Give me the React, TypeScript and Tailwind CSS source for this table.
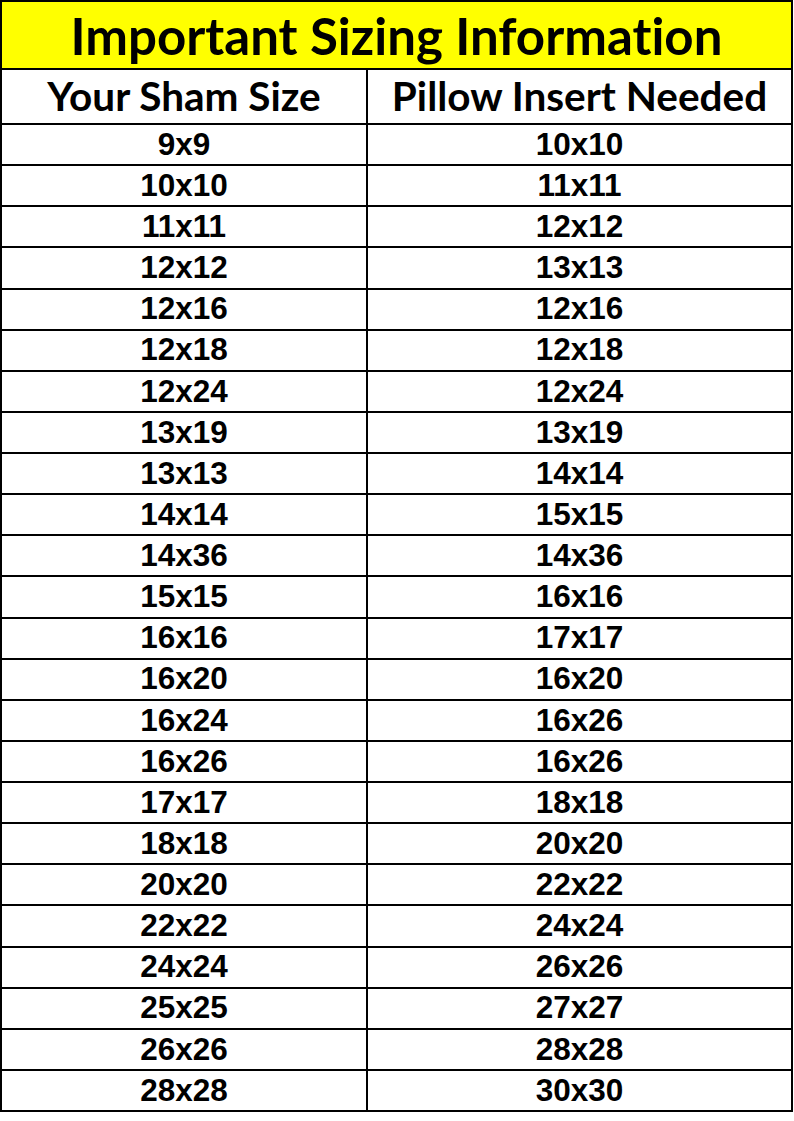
import React from 'react';

const rows: [string, string][] = [
    ['9x9', '10x10'],
    ['10x10', '11x11'],
    ['11x11', '12x12'],
    ['12x12', '13x13'],
    ['12x16', '12x16'],
    ['12x18', '12x18'],
    ['12x24', '12x24'],
    ['13x19', '13x19'],
    ['13x13', '14x14'],
    ['14x14', '15x15'],
    ['14x36', '14x36'],
    ['15x15', '16x16'],
    ['16x16', '17x17'],
    ['16x20', '16x20'],
    ['16x24', '16x26'],
    ['16x26', '16x26'],
    ['17x17', '18x18'],
    ['18x18', '20x20'],
    ['20x20', '22x22'],
    ['22x22', '24x24'],
    ['24x24', '26x26'],
    ['25x25', '27x27'],
    ['26x26', '28x28'],
    ['28x28', '30x30'],
];

const App: React.FC = () => {
    return (
        <div className="w-[794px] h-[1121px] bg-white">
            <div className="w-[793px] border-2 border-black text-black">
                {/* Title bar */}
                <div className="h-[66px] bg-[#ffff00] flex items-center justify-center font-['Lato',sans-serif] font-bold text-[51px] leading-none [font-variant-ligatures:none]">
                    Important Sizing Information
                </div>

                {/* Column headings */}
                <div className="grid grid-cols-[366px_1fr] h-[55px] border-t-2 border-black font-['Lato',sans-serif] font-bold text-[40.5px] leading-none [font-variant-ligatures:none]">
                    <div className="border-r-2 border-black flex items-center justify-center">Your Sham Size</div>
                    <div className="flex items-center justify-center">Pillow Insert Needed</div>
                </div>

                {/* Size rows */}
                {rows.map(([sham, insert]) => (
                    <div
                        key={sham + insert}
                        className="grid grid-cols-[366px_1fr] h-[41.125px] border-t-2 border-black font-['Liberation_Sans',Arial,sans-serif] font-bold text-[31.5px] leading-none"
                    >
                        <div className="border-r-2 border-black flex items-center justify-center">{sham}</div>
                        <div className="flex items-center justify-center">{insert}</div>
                    </div>
                ))}
            </div>
        </div>
    );
};

export default App;
